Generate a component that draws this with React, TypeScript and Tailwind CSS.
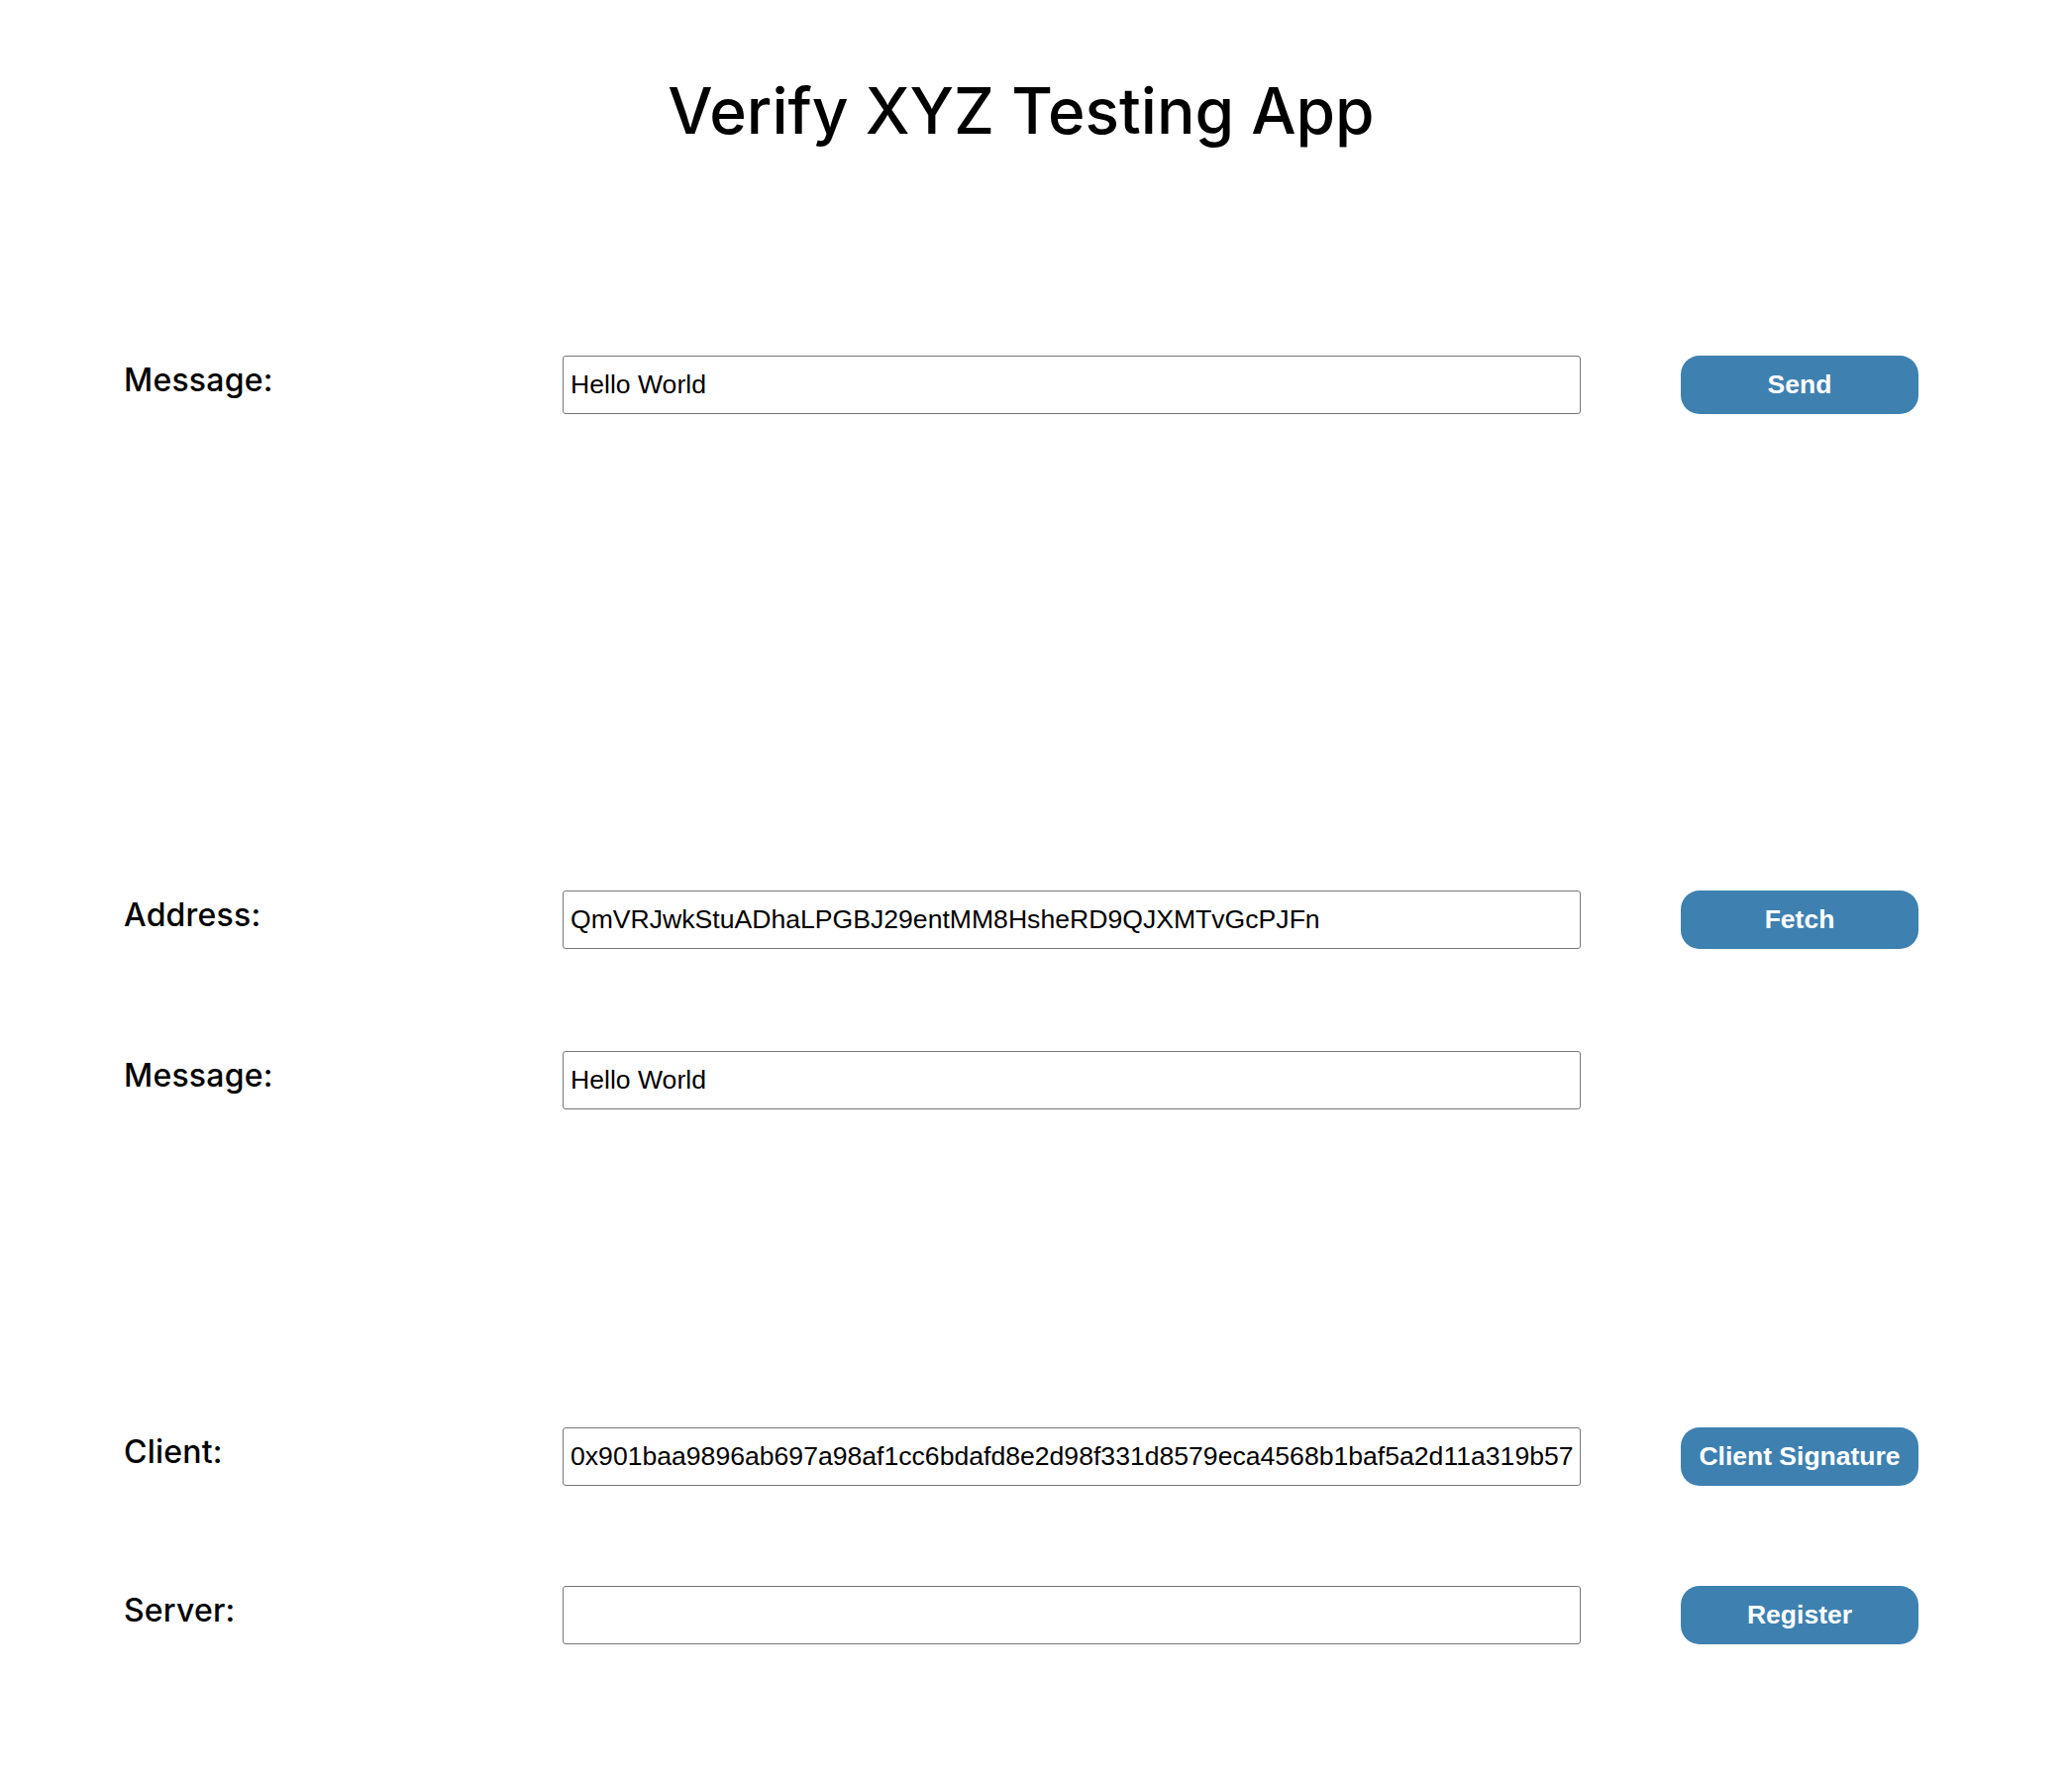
import React from "react";

interface RowProps {
  label: string;
  value: string;
  button?: string;
  className?: string;
}

const Row = ({ label, value, button, className }: RowProps) => {
  return (
    <div className={`flex items-start ${className ?? ""}`}>
      <label className="w-[444px] shrink-0 pt-[9px] pl-[1px] text-[32px] tracking-[0.2px] leading-none font-medium text-black font-['Inter',sans-serif]">
        {label}
      </label>
      <input
        type="text"
        defaultValue={value}
        className="w-[1028px] h-[59px] shrink-0 rounded-[3px] border border-[#767676] bg-white px-[7px] text-[26.6px] text-black font-['Liberation_Sans',Arial,sans-serif] outline-none"
      />
      {button && (
        <button className="ml-[101px] w-[240px] h-[59px] shrink-0 rounded-[19px] bg-[#3e81b1] text-[26.5px] font-bold text-white font-['Liberation_Sans',Arial,sans-serif]">
          {button}
        </button>
      )}
    </div>
  );
};

const App = () => {
  return (
    <div className="min-h-screen w-full bg-white pl-[124px] pb-[120px]">
      <h1 className="pt-[80px] pr-[154px] text-center text-[64px] leading-none font-medium text-black font-['Inter',sans-serif]">
        Verify XYZ Testing App
      </h1>

      {/* send a message */}
      <Row className="mt-[215px]" label="Message:" value="Hello World" button="Send" />

      {/* fetch by address */}
      <Row
        className="mt-[481px]"
        label="Address:"
        value="QmVRJwkStuADhaLPGBJ29entMM8HsheRD9QJXMTvGcPJFn"
        button="Fetch"
      />
      <Row className="mt-[103px]" label="Message:" value="Hello World" />

      {/* signatures */}
      <Row
        className="mt-[321px]"
        label="Client:"
        value="0x901baa9896ab697a98af1cc6bdafd8e2d98f331d8579eca4568b1baf5a2d11a319b57"
        button="Client Signature"
      />
      <Row className="mt-[101px]" label="Server:" value="" button="Register" />
    </div>
  );
};

export default App;
